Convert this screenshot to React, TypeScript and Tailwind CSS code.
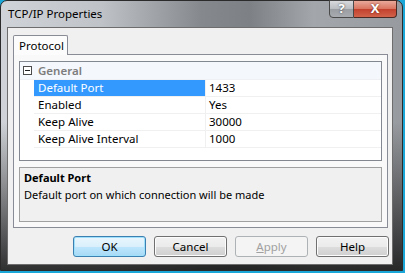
import React from 'react';

const font = { fontFamily: '"Noto Sans", "Open Sans", Arial, sans-serif' };

const rows = [
  { name: 'Default Port', value: '1433', selected: true },
  { name: 'Enabled', value: 'Yes' },
  { name: 'Keep Alive', value: '30000' },
  { name: 'Keep Alive Interval', value: '1000' },
];

function DialogButton({ label, kind }: { label: React.ReactNode; kind?: 'default' | 'disabled' }) {
  const base = 'w-[73px] h-[21px] rounded-[3px] border text-[11.5px] flex items-center justify-center';
  if (kind === 'default') {
    return (
      <div className={`${base} border-[#3c7fb1] bg-[linear-gradient(#eaf6fd_0%,#d9f0fc_50%,#bee6fd_51%,#a7d9f5_100%)] text-black shadow-[inset_0_0_0_1px_#9fe0fb]`}>
        {label}
      </div>
    );
  }
  if (kind === 'disabled') {
    return <div className={`${base} border-[#adb2b5] bg-[#f4f4f4] text-[#a0a0a0]`}>{label}</div>;
  }
  return (
    <div className={`${base} border-[#707070] bg-[linear-gradient(#f2f2f2_0%,#ebebeb_50%,#dddddd_51%,#cfcfcf_100%)] text-black shadow-[inset_0_0_0_1px_#fcfcfc]`}>
      {label}
    </div>
  );
}

export default function App() {
  return (
    <div className="w-[405px] h-[273px] bg-[#1ba6d8]" style={font}>
      {/* Window frame */}
      <div className="relative w-[403px] h-[271px] rounded-t-[7px] border border-[#2b2b2b] bg-[linear-gradient(180deg,rgba(0,0,0,0)_0%,rgba(0,0,0,0)_45%,rgba(20,20,20,0.85)_100%),linear-gradient(90deg,#d0d3d7_0%,#bfc2c6_25%,#85888c_50%,#7d8084_62%,#a3a6aa_78%,#979a9e_100%)] flex flex-col">
        {/* Title bar */}
        <div className="h-[26px] flex items-center pl-[7px] text-[11.5px] text-black">
          TCP/IP Properties
        </div>

        {/* Caption buttons */}
        <div className="absolute top-[-1px] right-[5px] flex">
          <div className="w-[25px] h-[18px] rounded-bl-[4px] border border-[#4a4a4a] bg-[linear-gradient(#d8dadd_0%,#b9bcc0_50%,#9a9ea3_51%,#a8acb1_100%)] flex items-center justify-center text-[13px] font-bold text-white [text-shadow:0_0_2px_#333]">
            ?
          </div>
          <div className="w-[43px] h-[18px] rounded-br-[4px] border border-l-0 border-[#4a2a24] bg-[linear-gradient(#e9a999_0%,#d9735f_50%,#c2412d_51%,#d2624a_100%)] flex items-center justify-center text-[13px] font-bold text-white [text-shadow:0_0_2px_#5a1a10]">
            X
          </div>
        </div>

        {/* Client area */}
        <div className="ml-[6px] w-[386px] h-[238px] border border-[#6d6d6d] bg-[#f0f0f0] flex flex-col">
          {/* Tab strip */}
          <div className="h-[26px] flex items-end pl-[5px]">
            <div className="w-[55px] h-[20px] border border-b-0 border-[#898c95] bg-[#fcfcfc] rounded-t-[2px] flex items-center pl-[5px] text-[11.5px] text-black relative top-[1px]">
              Protocol
            </div>
          </div>

          {/* Tab panel */}
          <div className="ml-[5px] w-[375px] h-[174px] border border-[#898c95] bg-[#f9f9f9] pl-[5px] pt-[6px] flex flex-col gap-[6px]">
            {/* Property grid */}
            <div className="w-[363px] h-[100px] border border-[#828790] bg-white flex flex-col">
              <div className="h-[18px] flex items-center bg-[#f4f7fc] border-b border-[#eef0f3]">
                <div className="w-[14px] flex justify-center">
                  <div className="w-[9px] h-[9px] border border-[#4b4b4b] bg-white flex items-center justify-center">
                    <div className="w-[5px] h-px bg-[#1f1f1f]" />
                  </div>
                </div>
                <div className="pl-[4px] text-[11.5px] font-semibold text-[#7d7d7d]">General</div>
              </div>
              {rows.map((r) => (
                <div key={r.name} className="h-[17px] flex text-[11.5px]">
                  <div className="w-[14px] shrink-0 bg-white" />
                  <div
                    className={`w-[172px] pl-[4px] flex items-center border-b border-r border-[#f0f0f0] ${
                      r.selected ? 'bg-[#3399ff] text-white' : 'text-black'
                    }`}
                  >
                    {r.name}
                  </div>
                  <div className="flex-1 pl-[3px] flex items-center border-b border-[#f0f0f0] text-black">{r.value}</div>
                </div>
              ))}
            </div>

            {/* Description */}
            <div className="w-[363px] h-[55px] border border-[#a0a0a0] bg-[#f0f0f0] px-[4px] pt-[1px] text-[11px] text-black leading-[17px]">
              <div className="font-bold">Default Port</div>
              <div>Default port on which connection will be made</div>
            </div>
          </div>

          {/* Buttons */}
          <div className="mt-[8px] flex justify-end gap-[8px] pr-[3px]">
            <DialogButton label="OK" kind="default" />
            <DialogButton label="Cancel" />
            <DialogButton label={<><span className="underline">A</span>pply</>} kind="disabled" />
            <DialogButton label="Help" />
          </div>
        </div>
      </div>
    </div>
  );
}
